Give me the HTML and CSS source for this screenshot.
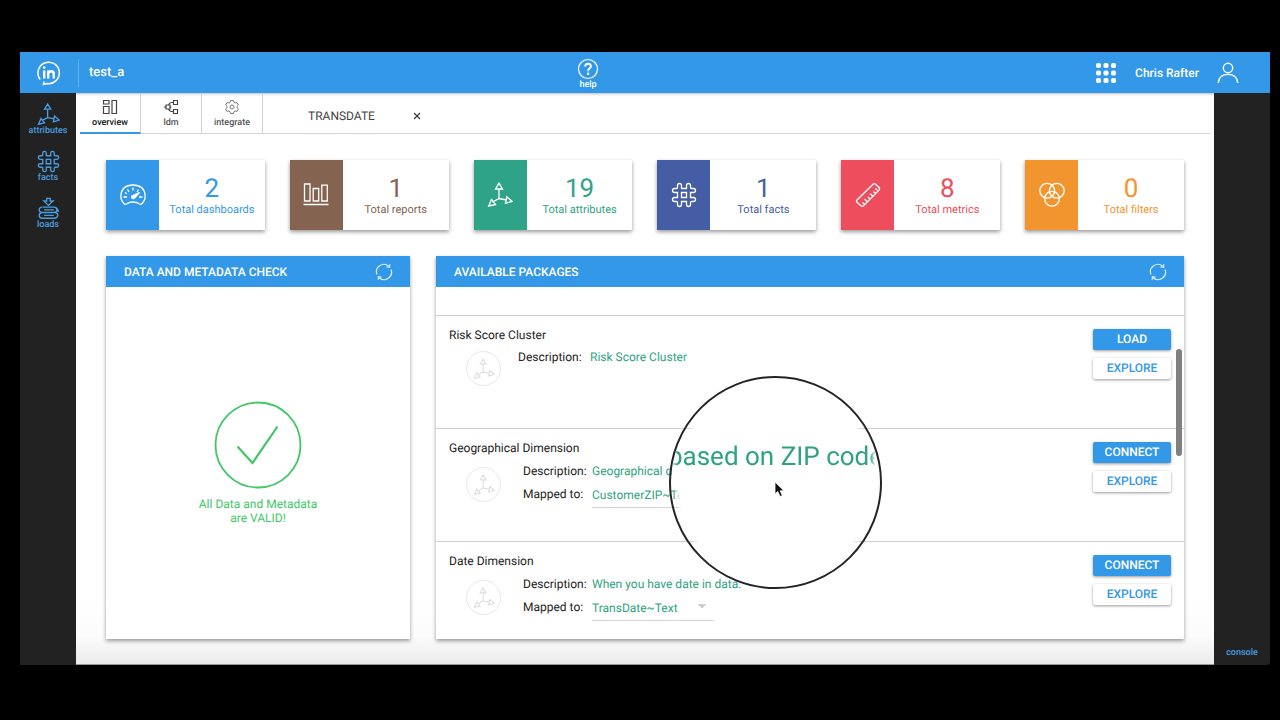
FILE: index.html
```html
<!DOCTYPE html>
<html lang="en">
<head>
<meta charset="utf-8">
<title>test_a</title>
<link rel="stylesheet" href="styles.css">
</head>
<body>
<svg class="defs" width="0" height="0" aria-hidden="true">
  <symbol id="axes" viewBox="0 0 26 26">
    <path d="M12 7v9.500L5.500 20M12 16.500l7.500 1.500M12 1.200l-3.500 5.800h7ZM19.800 14.800l5.200 4.500-6.500 2ZM4.500 17.500l4 5-6.800 1.500Z"/>
  </symbol>
  <symbol id="hash" viewBox="0 0 26 26">
    <path d="M10.500 7V3.500Q10.500 1.500 8.500 1.500T6.500 3.500V5.500Q6.500 6.500 5.500 6.500H3.500Q1.500 6.500 1.500 8.500T3.500 10.500H6.500V15.500H3.500Q1.500 15.500 1.500 17.500T3.500 19.500H5.500Q6.500 19.500 6.500 20.500V22.500Q6.500 24.500 8.500 24.500T10.500 22.500V19.500H15.500V22.500Q15.500 24.500 17.500 24.500T19.500 22.500V20.500Q19.500 19.500 20.500 19.500H22.500Q24.500 19.500 24.500 17.500T22.500 15.500H19.500V10.500H22.500Q24.500 10.500 24.500 8.500T22.500 6.500H20.500Q19.500 6.500 19.500 5.500V3.500Q19.500 1.500 17.500 1.500T15.500 3.500V6.500H10.500M10.500 10.500H15.500V15.500H10.500Z"/>
  </symbol>
  <symbol id="refresh" viewBox="0 0 18 18">
    <path d="M2 11.500A7.400 7.400 0 0 1 13.800 3.300M16 6.500A7.400 7.400 0 0 1 4.200 14.700M14.800 1.200L14.600 4.400 11.500 3.900M3.200 16.800L3.400 13.600 6.500 14.100"/>
  </symbol>
</svg>
<div class="app">
  <header class="topbar">
    <a class="logo" href="#" aria-label="Home">
      <svg viewBox="0 0 26 26" width="26" height="26" fill="none" stroke="#fff"><path d="M4.200 19.500A10.700 10.700 0 1 1 11 23.500L7.500 24.500 8.200 21.500" stroke-width="1.500"/><path d="M8.200 10.500v8M12.200 18.500v-8M12.200 14q0-2.800 2.800-2.800t2.800 2.800v4.500" stroke-width="2.400"/><circle cx="8.200" cy="7.600" r="1.300" fill="#fff" stroke="none"/></svg>
    </a>
    <span class="project">test_a</span>
    <a class="help" href="#">
      <svg viewBox="0 0 22 22" width="22" height="22"><circle cx="11" cy="11" r="9.500" fill="none" stroke="#fff" stroke-width="1.200"/><path d="M8.200 8.500q0-2.800 2.900-2.800 2.800 0 2.800 2.500 0 1.300-1.500 2.400-1.300 1-1.300 2.600" fill="none" stroke="#fff" stroke-width="1.900"/><circle cx="11.100" cy="15.800" r="1.200" fill="#fff"/></svg>
      <span>help</span>
    </a>
    <div class="account">
      <button class="plain" aria-label="Apps"><svg viewBox="0 0 22 22" width="22" height="22" fill="#fff"><rect x="1" y="1" width="5" height="5" rx="1.800"/><rect x="8.500" y="1" width="5" height="5" rx="1.800"/><rect x="16" y="1" width="5" height="5" rx="1.800"/><rect x="1" y="8.500" width="5" height="5" rx="1.800"/><rect x="8.500" y="8.500" width="5" height="5" rx="1.800"/><rect x="16" y="8.500" width="5" height="5" rx="1.800"/><rect x="1" y="16" width="5" height="5" rx="1.800"/><rect x="8.500" y="16" width="5" height="5" rx="1.800"/><rect x="16" y="16" width="5" height="5" rx="1.800"/></svg></button>
      <span class="user">Chris Rafter</span>
      <button class="plain" aria-label="Profile"><svg viewBox="0 0 22 22" width="22" height="22" fill="none" stroke="#fff" stroke-width="1.400"><circle cx="11" cy="6" r="4.700"/><path d="M1.200 21q1-8.600 9.800-8.600T20.800 21"/></svg></button>
    </div>
  </header>
  <div class="body">
    <nav class="rail">
      <a href="#"><svg class="line" width="23" height="23"><use href="#axes"/></svg><span>attributes</span></a>
      <a href="#"><svg class="line" width="23" height="23"><use href="#hash"/></svg><span>facts</span></a>
      <a href="#"><svg class="line" width="23" height="23" viewBox="0 0 26 26"><path d="M11 1.500h4v3h3.200L13 9.500 7.800 4.500H11ZM6 11.500H19q3.500 0 3.500 3T19 17.500H5.500q-3-.3-3-3t3-3M20 17.500q3.500.3 3.500 3T20 24H6q-3.500-.3-3.500-3.200T5.500 17.500M8 14.500H19M8 20.800H19M21 12q3.500 2 3 5"/></svg><span>loads</span></a>
    </nav>
    <main class="main">
      <nav class="tabs">
        <a class="tab active" href="#"><svg viewBox="0 0 16 16" width="16" height="16"><path d="M1.500 1.500h5.500v3.500h-5.500ZM1.500 7.500h5.500v7h-5.500ZM10 1.500h4.500v13h-4.500Z"/></svg><span>overview</span></a>
        <a class="tab" href="#"><svg viewBox="0 0 16 16" width="16" height="16"><path d="M10.500 1.500h4v4h-4ZM10.500 10.500h4v4h-4ZM3 6h4v4H3ZM10.500 3.500H8.200Q6.500 3.500 5.500 6M5.500 10q1 2.500 2.700 2.500H10.500M.8 8H3M7 8h1.500"/></svg><span>ldm</span></a>
        <a class="tab" href="#"><svg class="gear" viewBox="0 0 16 16" width="16" height="16"><path d="M6.600 1.500h2.800l.5 1.800 1.200.7 1.900-.5 1.400 2.500-1.400 1.300v1.400l1.400 1.300-1.400 2.500-1.900-.5-1.200.7-.5 1.800H6.600l-.5-1.800-1.200-.7-1.900.5L1.600 10 3 8.700V7.300L1.600 6 3 3.500l1.900.5 1.200-.7Z"/><circle cx="8" cy="8" r="2"/></svg><span>integrate</span></a>
        <div class="doc"><a href="#">TRANSDATE</a><button class="plain" aria-label="Close"><svg viewBox="0 0 8 8" width="8" height="8"><path d="M1 1l6 6M7 1L1 7" stroke="#333" stroke-width="1.100"/></svg></button></div>
      </nav>
      <div class="content">
        <section class="stats">
          <article class="stat blue"><div class="badge"><svg width="26" height="26" viewBox="0 0 26 26"><path d="M5 22.500Q.8 19 .8 14 1.500 3 13 3t12.200 11Q25.200 19 21 22.500L18.500 21.500Q17 20 13 20T7.500 21.500Z"/><path d="M13 5.500v3M7.500 7.500l1.500 2.500M18.500 7.500 17 10M3.500 15h3.500M19 15h3.500M4.800 10.500l2 1.200"/><path d="M19.500 10.500 12 14a1.600 1.600 0 1 0 2.500 2Z" fill="#fff"/></svg></div><div class="info"><strong>2</strong><span>Total dashboards</span></div></article>
          <article class="stat brown"><div class="badge"><svg width="26" height="26" viewBox="0 0 26 26"><path d="M1.500 2h5.500v17H1.500ZM10.200 6.500h5.500V19h-5.500ZM18.800 3.200h5.500V19h-5.500ZM.5 22.500h25"/></svg></div><div class="info"><strong>1</strong><span>Total reports</span></div></article>
          <article class="stat green"><div class="badge"><svg width="26" height="26"><use href="#axes"/></svg></div><div class="info"><strong>19</strong><span>Total attributes</span></div></article>
          <article class="stat indigo"><div class="badge"><svg width="26" height="26"><use href="#hash"/></svg></div><div class="info"><strong>1</strong><span>Total facts</span></div></article>
          <article class="stat red"><div class="badge"><svg width="26" height="26" viewBox="0 0 26 26"><path d="M2 18 18 2.200q1.300-1.200 2.600 0L24 5.500q1.200 1.300 0 2.600L8.500 23.800q-1.300 1.200-2.600 0L2 20.300Q1 19 2 18ZM7.500 20.500l2 2M9.500 17l3 3M13 15l2 2M15 11.500l3 3M18.500 9.500l2 2M20.500 6.500l2 2"/></svg></div><div class="info"><strong>8</strong><span>Total metrics</span></div></article>
          <article class="stat orange"><div class="badge"><svg width="26" height="26" viewBox="0 0 26 26"><circle cx="8.200" cy="8.700" r="7.400"/><circle cx="17.800" cy="8.700" r="7.400"/><circle cx="13" cy="16.700" r="7.400"/></svg></div><div class="info"><strong>0</strong><span>Total filters</span></div></article>
        </section>
        <div class="panels">
          <section class="panel">
            <div class="panel-head"><h2>DATA AND METADATA CHECK</h2><button class="plain" aria-label="Refresh check"><svg class="refresh" width="18" height="18"><use href="#refresh"/></svg></button></div>
            <div class="check"><svg width="88" height="88" viewBox="0 0 88 88"><circle cx="44" cy="44" r="42.500" stroke-width="1.800"/><path d="M23.500 45.500 38.500 62 63.500 25.500" stroke-width="2.200"/></svg><p>All Data and Metadata<br>are VALID!</p></div>
          </section>
          <section class="panel packages">
            <div class="panel-head"><h2>AVAILABLE PACKAGES</h2><button class="plain" aria-label="Refresh packages"><svg class="refresh" width="18" height="18"><use href="#refresh"/></svg></button></div>
            <div class="list">
              <article class="package simple">
                <h3>Risk Score Cluster</h3>
                <div class="details"><span class="round"><svg width="22" height="22"><use href="#axes"/></svg></span>
                  <div class="fields"><span>Description:</span><span class="value">Risk Score Cluster</span></div></div>
                <div class="actions"><button class="btn primary">LOAD</button><button class="btn">EXPLORE</button></div>
              </article>
              <article class="package">
                <h3>Geographical Dimension</h3>
                <div class="details"><span class="round"><svg width="22" height="22"><use href="#axes"/></svg></span>
                  <div class="fields"><span>Description:</span><span class="value">Geographical d</span><label for="geo">Mapped to:</label><select id="geo"><option>CustomerZIP~Text</option></select></div></div>
                <div class="actions"><button class="btn primary">CONNECT</button><button class="btn">EXPLORE</button></div>
              </article>
              <article class="package">
                <h3>Date Dimension</h3>
                <div class="details"><span class="round"><svg width="22" height="22"><use href="#axes"/></svg></span>
                  <div class="fields"><span>Description:</span><span class="value">When you have date in data.</span><label for="date">Mapped to:</label><select id="date"><option>TransDate~Text</option></select></div></div>
                <div class="actions"><button class="btn primary">CONNECT</button><button class="btn">EXPLORE</button></div>
              </article>
            </div>
            <div class="thumb"></div>
            <div class="lens"><span>based on ZIP code</span><svg class="cursor" width="12" height="18" viewBox="0 0 12 18"><path d="M1 1v12l2.800-2.500L6 15.500l2.300-1L6.200 9.800H10Z" fill="#111" stroke="#fff" stroke-width=".8"/></svg></div>
          </section>
        </div>
      </div>
    </main>
    <aside class="console"><a href="#">console</a></aside>
  </div>
</div>
</body>
</html>
```
FILE: styles.css
```css
* { box-sizing: border-box; }
body { margin: 0; background: #000; font-family: Roboto, "Liberation Sans", sans-serif; font-size: 12px; color: #222; text-rendering: geometricPrecision; }
a { color: inherit; text-decoration: none; }
h2, h3, p { margin: 0; font-weight: 400; }
button, select { font: inherit; text-rendering: inherit; }
svg { display: block; }
.defs { position: absolute; }
.plain { padding: 0; border: 0; background: none; cursor: pointer; }

.app { display: flex; flex-direction: column; min-height: 100vh; padding: 52px 10px 55px 20px; }
.topbar { display: grid; grid-template-columns: 59px 498fr 22px 671fr; align-items: center; height: 41px; background: #3398e8; color: #fff; font-weight: 500; }
.logo { display: flex; justify-content: center; height: 28px; align-items: center; border-right: 1px solid #5fb2f2; }
.project { padding-left: 10px; font-size: 13px; }
.help { display: flex; flex-direction: column; align-items: center; font-size: 9px; line-height: 11px; padding-top: 3px; }
.account { display: flex; align-items: center; justify-content: flex-end; padding-right: 31px; }
.user { margin: 0 18px; }

.body { display: flex; flex: 1; }
.rail, .console { flex: 0 0 56px; background: #222; color: #4a9de0; font-size: 9px; font-weight: 500; line-height: 11px; }
.rail { display: flex; flex-direction: column; gap: 13px; padding-top: 10px; }
.rail a { display: flex; flex-direction: column; align-items: center; }
.line { fill: none; stroke: #4a9de0; stroke-width: 1.5; }
.console { display: flex; align-items: flex-end; justify-content: center; padding-bottom: 6px; border-radius: 0 0 3px 0; }

.main { flex: 1; min-width: 0; background: linear-gradient(#fff, #fff 88%, #fcfcfc 95%, #ebebeb); border-bottom: 1px solid #999; box-shadow: inset 0 3px 3px -2px #bbb; }
.tabs { display: flex; height: 41px; margin: 0 4px; border-bottom: 1px solid #d6d6d6; }
.tab { display: flex; flex-direction: column; align-items: center; gap: 1px; width: 61px; height: 41px; padding-top: 6px; border-right: 1px solid #d2d2d2; color: #555; font-size: 9px; font-weight: 500; line-height: 14px; }
.tab svg { fill: none; stroke: #444; stroke-width: 1.2; }
.tab .gear { stroke: #777; stroke-width: 1; }
.tab.active { color: #111; border-bottom: 2px solid #3398e8; }
.doc { display: flex; align-items: center; gap: 38px; padding: 5px 0 0 45px; color: #444; }

.content { display: grid; gap: 26px; padding: 26px 30px 25px; }
.stats { display: grid; grid-template-columns: repeat(6, 1fr); gap: 25px; }
.stat { display: flex; height: 70px; background: #fff; box-shadow: 0 2px 4px #0006; font-size: 11px; }
.badge { display: flex; flex: 0 0 53px; align-items: center; justify-content: center; background: currentColor; }
.badge svg { fill: none; stroke: #fff; stroke-width: 1.3; }
.info { display: flex; flex: 1; flex-direction: column; align-items: center; padding-top: 15px; line-height: 13px; }
.info strong { font-size: 26px; font-weight: 400; line-height: 28px; }
.blue { color: #3398e8; }
.brown { color: #846350; }
.green { color: #2fa388; }
.indigo { color: #455da5; }
.red { color: #ee4d5d; }
.orange { color: #f2952f; }

.panels { display: grid; grid-template-columns: 304fr 748fr; gap: 26px; }
.panel { position: relative; display: flex; flex-direction: column; height: 383px; background: #fff; box-shadow: 0 2px 4px #0006; }
.panel-head { display: flex; flex: 0 0 31px; align-items: center; justify-content: space-between; padding: 0 17px 0 18px; background: #3398e8; color: #fff; }
.panel-head h2 { font-size: 12px; font-weight: 500; }
.refresh { fill: none; stroke: #d5ecff; stroke-width: 1.2; }
.check { display: flex; flex: 1; flex-direction: column; align-items: center; justify-content: center; gap: 8px; color: #42c767; text-align: center; line-height: 14px; }
.check svg { fill: none; stroke: #42c767; }

.list { flex: 1; min-height: 0; padding-top: 28px; overflow: hidden; }
.package { display: grid; grid-template-columns: 1fr 78px; grid-template-rows: 24px 1fr; height: 113px; padding: 9px 13px 0; border-top: 1px solid #d2d2d2; }
.package h3 { padding-top: 2px; font-size: 12px; line-height: 16px; }
.details { display: flex; gap: 22px; padding: 1px 0 0 17px; align-items: flex-start; grid-column: 1; }
.round { display: flex; flex: 0 0 35px; height: 35px; align-items: center; justify-content: center; margin-top: 4px; border: 1px solid #e8e8e8; border-radius: 50%; }
.round svg { fill: none; stroke: #dedede; stroke-width: 1.3; }
.fields { display: grid; grid-template-columns: 64px 122px; column-gap: 5px; line-height: 16px; row-gap: 7px; }
.value { white-space: nowrap; color: #2fa37f; }
.fields label { height: 16px; }
.fields select { height: 22px; margin: 0; padding: 0 0 4px; border: 0; border-bottom: 1px solid #d5d5d5; border-radius: 0; appearance: none; color: #2fa37f; background: conic-gradient(from -45deg at 50% 100%, #ccc 90deg, transparent 0) no-repeat right 7px top 5px / 10px 5px; }
.simple .details { gap: 17px; padding-top: 0; }
.simple .round { margin-top: 2px; }
.simple .fields { column-gap: 8px; }
.actions { display: flex; flex-direction: column; gap: 8px; grid-column: 2; grid-row: 1 / 3; padding-top: 4px; }
.btn { height: 21px; padding: 0; border: 0; border-radius: 2px; background: #fff; box-shadow: 0 1px 3px #0006; color: #3398e8; font-weight: 500; line-height: 21px; cursor: pointer; }
.primary { background: #3398e8; color: #fff; }

.thumb { position: absolute; top: 93px; right: 2px; width: 6px; height: 107px; border-radius: 3px; background: #808080; }
.lens { position: absolute; top: 120px; left: 233px; display: flex; justify-content: center; width: 213px; height: 213px; padding-top: 64px; overflow: hidden; border: 2px solid #242424; border-radius: 50%; background: radial-gradient(circle closest-side, #fff 92%, #fff0 98%); }
.lens span { flex: none; color: #2fa37f; font-size: 26px; line-height: 30px; mask-image: linear-gradient(90deg, transparent 2px, #000 10px, #000 202px, transparent 208px); }
.cursor { position: absolute; top: 103px; left: 103px; }
```
